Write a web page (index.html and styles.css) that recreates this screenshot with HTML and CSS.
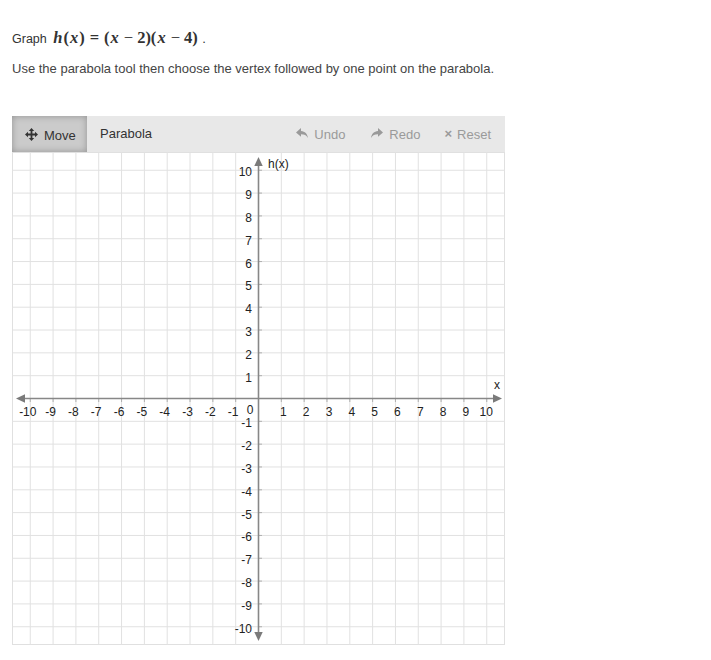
FILE: index.html
```html
<!DOCTYPE html>
<html>
<head>
<meta charset="utf-8">
<link rel="stylesheet" href="styles.css">
</head>
<body>
<div class="page">
  <p class="q1">Graph <span class="math"><i>h</i>(<i>x</i>)<span class="rel">=</span>(<i>x</i><span class="bin">−</span>2)(<i>x</i><span class="bin">−</span>4)</span> <span class="dot">.</span></p>
  <p class="q2">Use the parabola tool then choose the vertex followed by one point on the parabola.</p>

  <div class="widget">
    <div class="toolbar">
      <div class="btn move">
        <svg class="ico" width="13" height="13" viewBox="0 0 13 13"><path d="M6.5 0 L9.2 3 H7.4 V5.6 H10 V3.8 L13 6.5 L10 9.2 V7.4 H7.4 V10 H9.2 L6.5 13 L3.8 10 H5.6 V7.4 H3 V9.2 L0 6.5 L3 3.8 V5.6 H5.6 V3 H3.8 Z" fill="#333"/></svg>
        <span>Move</span>
      </div>
      <div class="btn parabola">Parabola</div>
      <div class="actions">
        <div class="act undo">
          <svg width="12" height="10" viewBox="0 0 12 10"><path d="M5 0 L0 4.4 L5 8.8 V6.2 C8.4 6.2 10.4 7.1 12 10 C11.4 5.9 9 3.4 5 3.1 Z" fill="#9a9a9a"/></svg>
          <span>Undo</span>
        </div>
        <div class="act redo">
          <svg width="12" height="10" viewBox="0 0 12 10"><path d="M7 0 L12 4.4 L7 8.8 V6.2 C3.6 6.2 1.6 7.1 0 10 C0.6 5.9 3 3.4 7 3.1 Z" fill="#9a9a9a"/></svg>
          <span>Redo</span>
        </div>
        <div class="act reset">
          <span class="x">×</span>
          <span>Reset</span>
        </div>
      </div>
    </div>
    <div class="board">
      <svg width="493" height="493" viewBox="0 0 493 493">
        <rect x="0.5" y="0.5" width="492" height="492" fill="#fff" stroke="#e0e0e0"/>
        <path class="grid" d="M18.26 0V493M41.08 0V493M63.91 0V493M86.73 0V493M109.56 0V493M132.38 0V493M155.2 0V493M178.03 0V493M200.85 0V493M223.68 0V493M269.32 0V493M292.15 0V493M314.97 0V493M337.8 0V493M360.62 0V493M383.44 0V493M406.27 0V493M429.09 0V493M451.92 0V493M474.74 0V493M0 18.26H493M0 41.08H493M0 63.91H493M0 86.73H493M0 109.56H493M0 132.38H493M0 155.2H493M0 178.03H493M0 200.85H493M0 223.68H493M0 269.32H493M0 292.15H493M0 314.97H493M0 337.8H493M0 360.62H493M0 383.44H493M0 406.27H493M0 429.09H493M0 451.92H493M0 474.74H493"/>
        <path class="ticks" d="M18.26 246.5V250M41.08 246.5V250M63.91 246.5V250M86.73 246.5V250M109.56 246.5V250M132.38 246.5V250M155.2 246.5V250M178.03 246.5V250M200.85 246.5V250M223.68 246.5V250M269.32 246.5V250M292.15 246.5V250M314.97 246.5V250M337.8 246.5V250M360.62 246.5V250M383.44 246.5V250M406.27 246.5V250M429.09 246.5V250M451.92 246.5V250M474.74 246.5V250M246.5 18.26H250M246.5 41.08H250M246.5 63.91H250M246.5 86.73H250M246.5 109.56H250M246.5 132.38H250M246.5 155.2H250M246.5 178.03H250M246.5 200.85H250M246.5 223.68H250M246.5 269.32H250M246.5 292.15H250M246.5 314.97H250M246.5 337.8H250M246.5 360.62H250M246.5 383.44H250M246.5 406.27H250M246.5 429.09H250M246.5 451.92H250M246.5 474.74H250"/>
        <path class="axis" d="M11 246.5H483M246.5 12V482"/>
        <polygon class="arrow" points="4,246.5 13,242.3 13,250.7"/>
        <polygon class="arrow" points="490,246.5 481,242.3 481,250.7"/>
        <polygon class="arrow" points="246.5,5 242.3,14 250.7,14"/>
        <polygon class="arrow" points="246.5,489 242.3,480 250.7,480"/>
        <g class="lbl">
          <text x="256" y="15.5">h(x)</text>
          <text x="482" y="236.5">x</text>
          <text x="238" y="261.5" text-anchor="middle">0</text>
        </g>
        <g class="lbl" text-anchor="middle">
          <text x="15.8" y="264">-10</text>
          <text x="38.6" y="264">-9</text>
          <text x="61.4" y="264">-8</text>
          <text x="84.2" y="264">-7</text>
          <text x="107.1" y="264">-6</text>
          <text x="129.9" y="264">-5</text>
          <text x="152.7" y="264">-4</text>
          <text x="175.5" y="264">-3</text>
          <text x="198.4" y="264">-2</text>
          <text x="221.2" y="264">-1</text>
          <text x="271.3" y="264">1</text>
          <text x="294.2" y="264">2</text>
          <text x="317" y="264">3</text>
          <text x="339.8" y="264">4</text>
          <text x="362.6" y="264">5</text>
          <text x="385.4" y="264">6</text>
          <text x="408.3" y="264">7</text>
          <text x="431.1" y="264">8</text>
          <text x="453.9" y="264">9</text>
          <text x="474.2" y="264">10</text>
        </g>
        <g class="lbl" text-anchor="end">
          <text x="240" y="24.2">10</text>
          <text x="240" y="47">9</text>
          <text x="240" y="69.8">8</text>
          <text x="240" y="92.6">7</text>
          <text x="240" y="115.5">6</text>
          <text x="240" y="138.3">5</text>
          <text x="240" y="161.1">4</text>
          <text x="240" y="183.9">3</text>
          <text x="240" y="206.8">2</text>
          <text x="240" y="229.6">1</text>
          <text x="240" y="275.2">-1</text>
          <text x="240" y="298.1">-2</text>
          <text x="240" y="320.9">-3</text>
          <text x="240" y="343.7">-4</text>
          <text x="240" y="366.5">-5</text>
          <text x="240" y="389.3">-6</text>
          <text x="240" y="412.2">-7</text>
          <text x="240" y="435">-8</text>
          <text x="240" y="457.8">-9</text>
          <text x="240" y="480.6">-10</text>
        </g>
      </svg>
    </div>
  </div>
</div>
</body>
</html>
```

FILE: styles.css
```css
html, body {
  margin: 0;
  padding: 0;
  background: #fff;
}
body {
  font-family: "Liberation Sans", Arial, sans-serif;
  color: #333;
}
.page {
  padding: 29px 0 0 12px;
}
.q1 {
  margin: 0;
  height: 18px;
  line-height: 18px;
  font-size: 12.5px;
  white-space: nowrap;
}
.math {
  font-family: "Liberation Serif", "Times New Roman", serif;
  font-weight: bold;
  font-size: 16.5px;
  margin-left: 2px;
}
.math i {
  font-style: italic;
  padding: 0 1px;
}
.math .rel {
  margin: 0 5px;
}
.math .bin {
  margin: 0 4px;
  font-weight: normal;
}
.dot {
  font-size: 13px;
  margin-left: 1px;
}
.q2 {
  margin: 13px 0 0 0;
  height: 18px;
  line-height: 18px;
  font-size: 13px;
  color: #444;
  white-space: nowrap;
}
.widget {
  margin-top: 38px;
  width: 493px;
}
.toolbar {
  height: 36px;
  background: #e8e8e8;
  display: flex;
  align-items: center;
  font-size: 13px;
}
.btn {
  height: 36px;
  display: flex;
  align-items: center;
}
.move {
  width: 75px;
  box-sizing: border-box;
  padding-left: 13px;
  background: #cbcbcb;
  box-shadow: inset 0 0 7px rgba(0, 0, 0, 0.28);
  color: #333;
  font-size: 13px;
}
.move .ico {
  margin-right: 6px;
  margin-top: 1px;
}
.move span {
  padding-top: 2px;
}
.parabola {
  margin-left: 13px;
  color: #333;
  font-size: 13px;
  padding-bottom: 2px;
}
.actions {
  margin-left: auto;
  padding-right: 14px;
  display: flex;
  align-items: center;
  color: #9a9a9a;
  font-size: 13px;
}
.act {
  display: flex;
  align-items: center;
}
.act svg {
  margin-top: -2px;
  margin-right: 6px;
}
.redo {
  margin-left: 26px;
}
.reset {
  margin-left: 24px;
}
.act .x {
  font-size: 13px;
  font-weight: bold;
  line-height: 1;
  margin-top: -2px;
  margin-right: 5px;
}
.board {
  height: 493px;
}
.board svg {
  display: block;
}
.grid {
  stroke: #e1e1e1;
  stroke-width: 1;
  fill: none;
}
.ticks {
  stroke: #b0b0b0;
  stroke-width: 1;
  fill: none;
}
.axis {
  stroke: #878787;
  stroke-width: 1.6;
  fill: none;
}
.arrow {
  fill: #7a7a7a;
}
.lbl text {
  font-family: "Liberation Sans", Arial, sans-serif;
  font-size: 12px;
  fill: #222;
}
```
